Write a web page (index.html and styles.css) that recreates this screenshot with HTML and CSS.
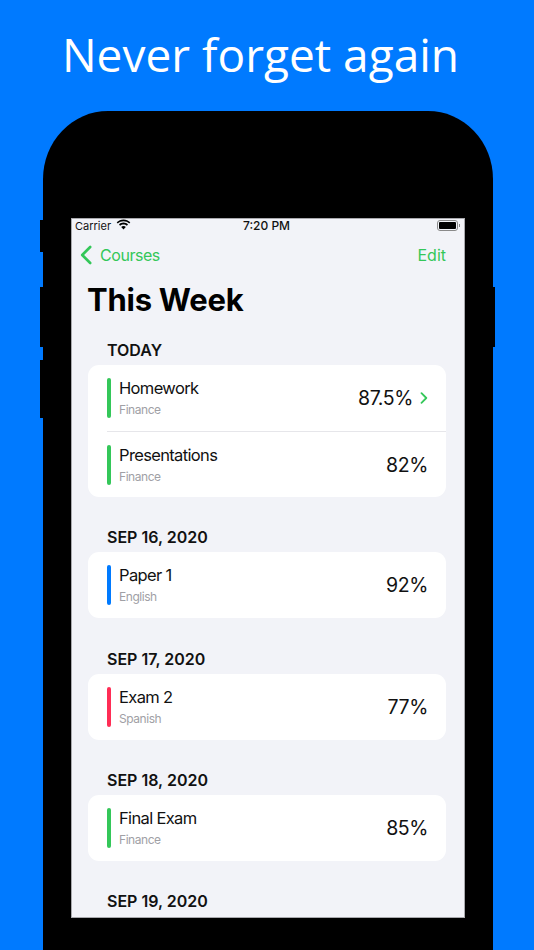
FILE: index.html
```html
<!DOCTYPE html>
<html lang="en">
<head>
<meta charset="utf-8">
<title>Never forget again</title>
<link rel="stylesheet" href="styles.css">
</head>
<body>
<div class="page">
  <h1 class="headline">Never forget again</h1>
  <div class="phone">
    <span class="btn btn-l1"></span>
    <span class="btn btn-l2"></span>
    <span class="btn btn-l3"></span>
    <span class="btn btn-r"></span>
    <div class="screen">
      <div class="status">
        <div class="status-left">
          <span>Carrier</span>
          <svg class="wifi" viewBox="0 0 15 11" width="15" height="11"><path d="M7.5 2.2c2.2 0 4.2.9 5.7 2.3l1.1-1.2C12.5 1.5 10.1.4 7.5.4S2.5 1.5.7 3.3l1.1 1.2c1.5-1.4 3.5-2.3 5.7-2.3z"/><path d="M7.5 5.4c1.3 0 2.5.5 3.4 1.3l1.1-1.2C10.800 4.300 9.200 3.600 7.500 3.600S4.200 4.300 3 5.500l1.100 1.200c.9-.8 2.100-1.300 3.400-1.300z"/><path d="M7.500 10.600 9.800 8c-.6-.6-1.400-.9-2.300-.9s-1.700.3-2.300.9z"/></svg>
        </div>
        <span class="status-time">7:20 PM</span>
        <div class="status-right">
          <span class="battery"><span class="battery-fill"></span></span>
          <span class="battery-cap"></span>
        </div>
      </div>
      <div class="nav">
        <div class="back">
          <svg class="back-icon" viewBox="0 0 12 20" width="12" height="20"><path d="M10.200 2 2.200 10l8 8" fill="none" stroke="#34c759" stroke-width="2.600" stroke-linecap="round" stroke-linejoin="round"/></svg>
          <span class="back-label">Courses</span>
        </div>
        <span class="edit">Edit</span>
      </div>
      <h2 class="large-title">This Week</h2>

      <section class="group">
        <h3 class="group-title">Today</h3>
        <div class="card">
          <div class="row">
            <span class="bar bar-green"></span>
            <div class="row-text"><span class="name">Homework</span><span class="course">Finance</span></div>
            <span class="pct">87.5%</span>
            <svg class="chev" viewBox="0 0 8 12" width="8" height="12"><path d="M1.500 1.200 6.300 6l-4.800 4.800" fill="none" stroke="#34c759" stroke-width="1.800" stroke-linecap="round" stroke-linejoin="round"/></svg>
          </div>
          <div class="row">
            <span class="bar bar-green"></span>
            <div class="row-text"><span class="name">Presentations</span><span class="course">Finance</span></div>
            <span class="pct">82%</span>
          </div>
        </div>
      </section>

      <section class="group">
        <h3 class="group-title">Sep 16, 2020</h3>
        <div class="card">
          <div class="row">
            <span class="bar bar-blue"></span>
            <div class="row-text"><span class="name">Paper 1</span><span class="course">English</span></div>
            <span class="pct">92%</span>
          </div>
        </div>
      </section>

      <section class="group">
        <h3 class="group-title">Sep 17, 2020</h3>
        <div class="card">
          <div class="row">
            <span class="bar bar-red"></span>
            <div class="row-text"><span class="name">Exam 2</span><span class="course">Spanish</span></div>
            <span class="pct">77%</span>
          </div>
        </div>
      </section>

      <section class="group">
        <h3 class="group-title">Sep 18, 2020</h3>
        <div class="card">
          <div class="row">
            <span class="bar bar-green"></span>
            <div class="row-text"><span class="name">Final Exam</span><span class="course">Finance</span></div>
            <span class="pct">85%</span>
          </div>
        </div>
      </section>

      <section class="group">
        <h3 class="group-title">Sep 19, 2020</h3>
      </section>
    </div>
  </div>
</div>
</body>
</html>
```

FILE: styles.css
```css
* { box-sizing: border-box; }
html, body { margin: 0; padding: 0; }
body { background: #007aff; font-family: Inter, "Liberation Sans", sans-serif; }
.page { width: 534px; height: 950px; overflow: hidden; background: #007aff; }
.headline {
  margin: 0;
  height: 111px;
  padding: 24px 13px 0 0;
  text-align: center;
  font: 400 46px/60px "Open Sans", sans-serif;
  color: #fff;
}
.phone {
  position: relative;
  width: 450px;
  height: 839px;
  margin-left: 43px;
  padding: 107px 28px 0;
  background: #000;
  border-radius: 65px 65px 0 0 / 68px 68px 0 0;
}
.btn { position: absolute; background: #000; }
.btn-l1 { left: -3px; top: 109px; width: 3px; height: 32px; }
.btn-l2 { left: -3px; top: 176px; width: 3px; height: 60px; }
.btn-l3 { left: -3px; top: 249px; width: 3px; height: 58px; }
.btn-r { right: -2px; top: 176px; width: 2px; height: 60px; }
.screen {
  width: 394px;
  height: 700px;
  overflow: hidden;
  background: #f2f3f8;
  color: #000;
  box-shadow: inset 0 0 0 1px rgba(0, 0, 0, 0.3);
}
.status {
  position: relative;
  display: flex;
  align-items: center;
  justify-content: space-between;
  height: 15px;
  padding: 0 5px 0 4px;
  font-size: 11px;
  color: #111;
}
.status-left { display: flex; align-items: center; gap: 5px; }
.wifi { fill: #000; margin-top: -3px; }
.status-time { position: absolute; left: 0; right: 3px; text-align: center; font-size: 12px; font-weight: 500; }
.status-right { display: flex; align-items: center; }
.battery {
  display: block;
  width: 21px;
  height: 11px;
  padding: 1px;
  border: 1px solid #8a8a8a;
  border-radius: 3px;
}
.battery-fill { display: block; height: 100%; background: #000; border-radius: 1px; }
.battery-cap { width: 1px; height: 3px; margin-left: 1px; background: #8a8a8a; }
.nav {
  display: flex;
  align-items: center;
  justify-content: space-between;
  height: 44px;
  padding: 0 19px 0 9px;
  font-size: 16px;
  color: #34c759;
}
.back { display: flex; align-items: center; gap: 8px; }
.back-label { letter-spacing: -0.45px; }
.large-title {
  margin: 0;
  padding: 0 0 0 16px;
  height: 56px;
  font-size: 31px;
  line-height: 46px;
  font-weight: 700;
  letter-spacing: -0.25px;
}
.group { margin: 0; padding: 0 19px 0 17px; }
.group-title {
  margin: 0;
  height: 32px;
  padding: 7px 0 0 19px;
  font-size: 16px;
  line-height: 21px;
  font-weight: 600;
  text-transform: uppercase;
  color: #111;
}
.group + .group { margin-top: 23.300px; }
.card { background: #fff; border-radius: 11px; padding-left: 19px; }
.row {
  display: flex;
  align-items: center;
  height: 66px;
  padding-right: 18px;
}
.row + .row { border-top: 1px solid #e6e6ea; }
.bar { width: 4px; height: 40px; border-radius: 2px; flex: none; }
.bar-green { background: #34c759; }
.bar-blue { background: #007aff; }
.bar-red { background: #ff2d55; }
.row-text { flex: 1; display: flex; flex-direction: column; margin: 2px 0 0 8px; }
.name { font-size: 16.500px; line-height: 22px; letter-spacing: -0.65px; color: #111; }
.course { font-size: 12px; line-height: 22px; letter-spacing: -0.45px; color: #a0a0a5; }
.pct { font-size: 19.500px; line-height: 26px; letter-spacing: -0.4px; color: #111; }
.chev { margin-left: 7px; flex: none; }
```
